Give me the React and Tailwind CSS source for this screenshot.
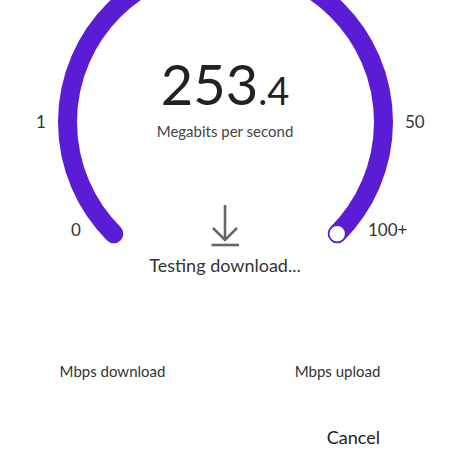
import React from "react";

const PURPLE = "#5a1dd5";

function Gauge() {
  const cx = 225.5;
  const cy = 122;
  const r = 158;
  const a = r * Math.SQRT1_2;
  const x1 = cx - a;
  const y1 = cy + a;
  const x2 = cx + a;
  const y2 = cy + a;
  return (
    <svg className="absolute left-0 top-0" width="450" height="260" viewBox="0 0 450 260">
      <path
        d={`M ${x1} ${y1} A ${r} ${r} 0 1 1 ${x2} ${y2}`}
        fill="none"
        stroke={PURPLE}
        strokeWidth="19"
        strokeLinecap="round"
      />
      <circle cx={x2} cy={y2} r="8.4" fill="#ffffff" stroke={PURPLE} strokeWidth="1.4" />
    </svg>
  );
}

function DownloadIcon() {
  return (
    <svg width="30" height="44" viewBox="0 0 30 44" className="block">
      <g stroke="#666666" strokeWidth="2.6" fill="none">
        <path d="M15 2 V37" />
        <path d="M3 25 L15 37 L27 25" />
        <path d="M1.5 42 H29" />
      </g>
    </svg>
  );
}

export default function App() {
  return (
    <div
      className="relative w-[450px] h-[450px] bg-white overflow-hidden flex flex-col text-[#333333]"
      style={{ fontFamily: "Lato, 'Noto Sans', sans-serif" }}
    >
      <Gauge />
      <span className="absolute left-[36px] top-[113px] text-[17px] leading-[17px] text-[#333333]">1</span>
      <span className="absolute left-[405px] top-[113px] text-[17px] leading-[17px] text-[#333333]">50</span>
      <span className="absolute left-[71px] top-[221px] text-[17px] leading-[17px] text-[#333333]">0</span>
      <span className="absolute left-[368px] top-[221px] text-[17px] leading-[17px] text-[#333333]">100+</span>

      <div className="relative flex flex-col items-center pt-[56px]">
        <div className="flex items-baseline leading-none text-[#222222]">
          <span className="text-[56px] font-normal leading-none">253</span>
          <span className="text-[38px] font-normal leading-none">.4</span>
        </div>
        <div className="mt-[9px] text-[15px] leading-[20px] text-[#444444]">Megabits per second</div>
        <div className="mt-[62px]">
          <DownloadIcon />
        </div>
        <div className="mt-[6px] text-[18px] leading-[24px] text-[#333333]">Testing download...</div>
      </div>

      <div className="grid grid-cols-2 mt-[84px] text-[15px] leading-[20px] text-[#333333]">
        <div className="text-center">Mbps download</div>
        <div className="text-center">Mbps upload</div>
      </div>

      <div className="flex justify-end mt-auto pr-[70px] pb-[1px]">
        <button className="text-[18px] leading-[24px] text-[#222222]">Cancel</button>
      </div>
    </div>
  );
}
